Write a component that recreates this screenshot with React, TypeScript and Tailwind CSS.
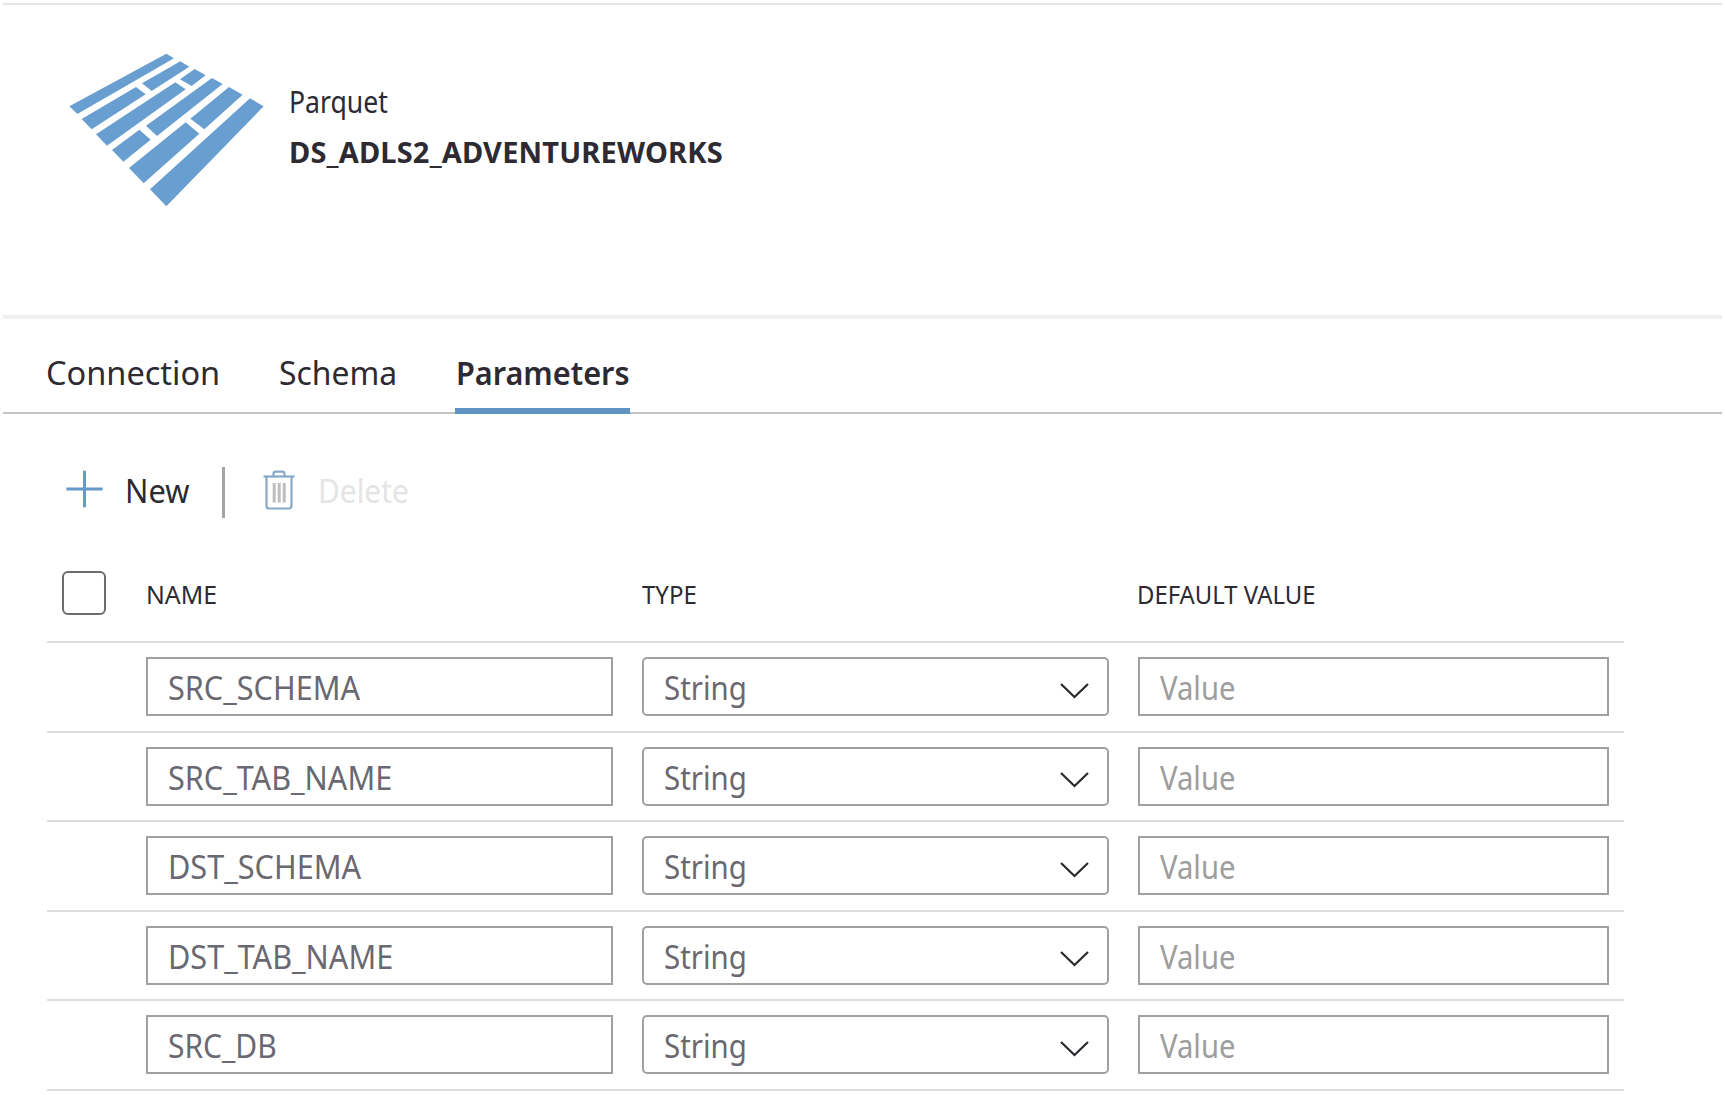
import React from "react";
import clsx from "clsx";

type Param = { name: string; width: string };

const params: Param[] = [
  { name: "SRC_SCHEMA", width: "scale-x-[0.957]" },
  { name: "SRC_TAB_NAME", width: "scale-x-[0.956]" },
  { name: "DST_SCHEMA", width: "scale-x-[0.957]" },
  { name: "DST_TAB_NAME", width: "scale-x-[0.956]" },
  { name: "SRC_DB", width: "scale-x-[0.937]" },
];

const planks = [
  "58,199 349,41 372,55 82,222",
  "276,130 391,64 418,80 305,153",
  "390,118 434,87 467,106 425,138",
  "95,237 258,141 287,163 125,268",
  "138,283 376,127 407,148 171,317",
  "288,257 486,114 518,132 321,288",
  "421,236 537,141 578,164 463,268",
  "186,330 268,269 302,299 220,365",
  "237,384 407,247 448,281 281,430",
  "300,448 600,175 641,199 349,499",
];

function ParquetLogo() {
  return (
    <svg className="h-[180px] w-[240px] shrink-0" viewBox="0 0 720 540" fill="#699fd0">
      {planks.map((p) => (
        <polygon key={p} points={p} />
      ))}
    </svg>
  );
}

/** Single line of text, narrowed horizontally from its left edge. */
function Text({ className, children }: { className: string; children: React.ReactNode }) {
  return <span className={clsx("block origin-left whitespace-nowrap", className)}>{children}</span>;
}

function PlusIcon() {
  return (
    <svg className="h-[38px] w-[38px] shrink-0" viewBox="0 0 38 38" stroke="#6699c8" strokeWidth="3">
      <path d="M18.500 .8v36.4M.3 19h36.4" />
    </svg>
  );
}

function TrashIcon() {
  return (
    <svg className="h-10 w-8 shrink-0" viewBox="0 0 32 40" fill="none" stroke="#86a9c9" strokeWidth="2.2">
      <path d="M.5 6.500h31" />
      <path d="M10.500 6V4a2.300 2.300 0 0 1 2.300-2.300h6.400a2.300 2.300 0 0 1 2.300 2.300V6" />
      <path d="M3.500 6.500v29.500a2.500 2.500 0 0 0 2.500 2.500h20a2.500 2.500 0 0 0 2.500-2.500V6.500" />
      <path d="M11.200 13v19.500M16.200 13v19.500M21.200 13v19.500" stroke="#bcbec0" strokeWidth="3" />
    </svg>
  );
}

function Chevron() {
  return (
    <svg className="mt-2 h-4 w-[29px]" viewBox="0 0 29 16" fill="none" stroke="#2b282e" strokeWidth="2.2">
      <path d="M1 1l13.500 13L28 1" />
    </svg>
  );
}

export default function App() {
  return (
    <div className="h-[1095px] w-[1725px] overflow-hidden bg-white px-[3px] pt-[3px] font-['Noto_Sans','Open_Sans',sans-serif] text-[#2d2a32]">
      <header className="flex h-[312px] border-t-[2px] border-[#e4e4e4] pt-[35px] pl-[47px]">
        <ParquetLogo />
        <div className="-ml-px pt-10">
          <Text className="scale-x-[0.887] text-[30px] leading-[44px]">Parquet</Text>
          <Text className="pt-[6px] text-[29px] leading-[44px] font-bold tracking-[0.18px]">
            DS_ADLS2_ADVENTUREWORKS
          </Text>
        </div>
      </header>

      <nav className="flex h-[99px] border-t-[4px] border-b-2 border-t-[#f0f0f0] border-b-[#c3c3c3] text-[33px] leading-[44px]">
        <Text className="mt-8 ml-[43px] w-[233px] scale-x-[0.985]">Connection</Text>
        <Text className="mt-8 w-[176px] scale-x-[0.966]">Schema</Text>
        <div className="z-10 -mb-[2px] h-[95px] w-[175px] border-b-[6px] border-[#5f93c2] pt-8">
          <Text className="scale-x-[0.929] pl-px font-semibold">Parameters</Text>
        </div>
      </nav>

      <div className="flex h-[106px] items-center pt-[47px] pl-[63px] text-[33px] leading-[44px]">
        <div className="-mt-[3px]">
          <PlusIcon />
        </div>
        <Text className="ml-[21px] w-[97px] scale-x-[0.933]">New</Text>
        <div className="mt-[3px] h-[51px] w-[3px] bg-[#a3a3a3]" />
        <div className="-mt-px ml-[38px]">
          <TrashIcon />
        </div>
        <Text className="ml-[23px] scale-x-[0.905] text-[#e4e4e4]">Delete</Text>
      </div>

      <main className="ml-[44px] w-[1577px] pt-[51px]">
        <div className="flex h-[72px] border-b-2 border-[#dedede] text-[25px] leading-[44px]">
          <div className="ml-[15px] h-11 w-11 shrink-0 rounded-md border-2 border-[#6d6b70]" />
          <Text className="ml-[40px] w-[496px] scale-x-[0.993] pt-px">NAME</Text>
          <Text className="w-[495px] scale-x-[0.96] pt-px">TYPE</Text>
          <Text className="scale-x-[0.955] pt-px">DEFAULT VALUE</Text>
        </div>
        {params.map((p) => (
          <div
            key={p.name}
            className="flex h-[89.600px] border-b-2 border-[#dedede] pt-[14px] pl-[99px] text-[32px] leading-[58px] text-[#6a6870]"
          >
            <div className="h-[59px] w-[467px] border-2 border-[#a0a0a0] pl-[20px]">
              <Text className={p.width}>{p.name}</Text>
            </div>
            <div className="ml-[29px] flex h-[59px] w-[467px] justify-between rounded-[5px] border-2 border-[#a0a0a0] pr-[18px] pl-[20px]">
              <Text className="scale-x-[0.92]">String</Text>
              <div className="flex h-[55px] items-center">
                <Chevron />
              </div>
            </div>
            <div className="ml-[29px] h-[59px] w-[471px] border-2 border-[#a0a0a0] pl-[20px] text-[#9d9d9d]">
              <Text className="scale-x-[0.914]">Value</Text>
            </div>
          </div>
        ))}
      </main>
    </div>
  );
}
